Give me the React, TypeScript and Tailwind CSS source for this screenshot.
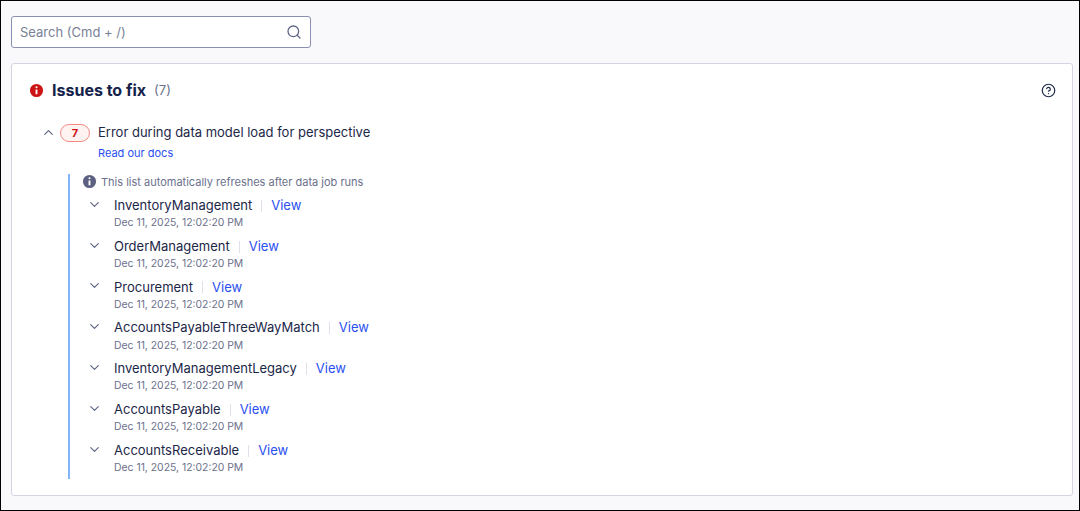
import React from 'react';
import { ChevronDown, ChevronUp, Search, CircleHelp } from 'lucide-react';

const models = [
    'InventoryManagement',
    'OrderManagement',
    'Procurement',
    'AccountsPayableThreeWayMatch',
    'InventoryManagementLegacy',
    'AccountsPayable',
    'AccountsReceivable',
];

const InfoDot: React.FC<{ className: string }> = ({ className }) => (
    <svg viewBox="0 0 16 16" className={className} fill="currentColor">
        <path
            fillRule="evenodd"
            d="M8 1a7 7 0 1 0 0 14A7 7 0 0 0 8 1Zm-1.1 3.6a1.1 1.1 0 1 1 2.2 0 1.1 1.1 0 0 1-2.2 0ZM7 7h2v5H7V7Z"
        />
    </svg>
);

const ModelRow: React.FC<{ name: string }> = ({ name }) => (
    <div className="flex h-[40.8px] items-start">
        <ChevronDown className="ml-[17px] h-[15px] w-[15px] text-[#5f6685]" strokeWidth={1.9} />
        <div className="ml-[12px] flex flex-col">
            <div className="flex h-[18px] items-center text-[13px] text-[#1c2748]">
                <span>{name}</span>
                <span className="mx-[9px] h-[12px] w-px bg-[#dfe1ea]" />
                <span className="text-[#2a4ff0]">View</span>
            </div>
            <div className="mt-[1.5px] text-[10.4px] leading-[14px] text-[#6b718c]">Dec 11, 2025, 12:02:20 PM</div>
        </div>
    </div>
);

export default function App() {
    return (
        <div className="flex h-[511px] w-[1080px] flex-col border border-black bg-[#f9f9fc] font-['Inter',sans-serif]">
            <div className="mt-[15px] ml-[10px] flex h-[32px] w-[300px] items-center justify-between rounded-[3px] border border-[#8a8fb3] bg-white pr-[8px] pl-[8px]">
                <span className="pt-[1px] text-[13px] text-[#7a7f96]">Search (Cmd + /)</span>
                <Search className="mb-[1px] h-[16px] w-[16px] text-[#5f6685]" strokeWidth={1.9} />
            </div>

            <div className="mt-[15px] ml-[10px] h-[433px] w-[1062px] rounded-[3px] border border-[#d3d5e2] bg-white">
                <div className="flex h-[52px] items-center justify-between pr-[16px] pl-[17px]">
                    <div className="flex items-center">
                        <InfoDot className="h-[15px] w-[15px] text-[#cc1414]" />
                        <span className="ml-[8px] text-[16px] font-bold text-[#14224a]">Issues to fix</span>
                        <span className="mt-[1px] ml-[8px] text-[13px] text-[#6b718c]">(7)</span>
                    </div>
                    <CircleHelp className="h-[15px] w-[15px] text-[#1c2748]" strokeWidth={1.9} />
                </div>

                <div className="mt-[7px] flex items-center pl-[29px]">
                    <ChevronUp className="h-[15px] w-[15px] text-[#5f6685]" strokeWidth={1.9} />
                    <span className="ml-[4px] flex h-[18px] w-[30px] items-center justify-center rounded-full border border-[#f48a85] bg-[#fff3f2] text-[11px] font-bold text-[#cc1414]">
                        7
                    </span>
                    <span className="ml-[8px] text-[13px] text-[#1c2748]">Error during data model load for perspective</span>
                </div>
                <div className="mt-[3px] ml-[86px] text-[11px] leading-[14px] text-[#2a4ff0]">Read our docs</div>

                <div className="mt-[14px] ml-[56px] h-[305px] border-l-2 border-[#82b4fb]">
                    <div className="flex h-[16px] items-center pl-[12px]">
                        <InfoDot className="h-[15px] w-[15px] text-[#5c6182]" />
                        <span className="ml-[4px] pt-[1px] text-[11px] text-[#6b718c]">This list automatically refreshes after data job runs</span>
                    </div>
                    <div className="mt-[7.3px] flex flex-col">
                        {models.map(name => (
                            <ModelRow key={name} name={name} />
                        ))}
                    </div>
                </div>
            </div>
        </div>
    );
}
